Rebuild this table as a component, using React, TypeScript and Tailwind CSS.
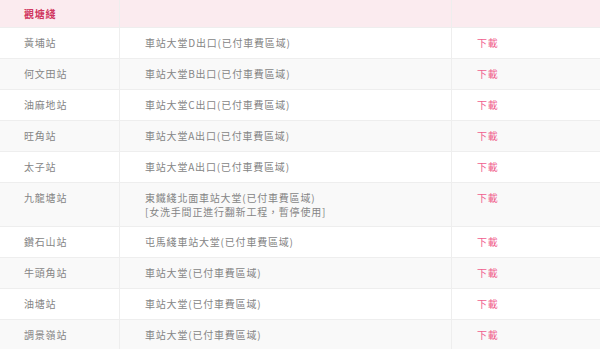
import React from 'react';

interface Row {
  station: string;
  location: string[];
}

const rows: Row[] = [
  { station: '黃埔站', location: ['車站大堂D出口(已付車費區域)'] },
  { station: '何文田站', location: ['車站大堂B出口(已付車費區域)'] },
  { station: '油麻地站', location: ['車站大堂C出口(已付車費區域)'] },
  { station: '旺角站', location: ['車站大堂A出口(已付車費區域)'] },
  { station: '太子站', location: ['車站大堂A出口(已付車費區域)'] },
  { station: '九龍塘站', location: ['東鐵綫北面車站大堂(已付車費區域)', '[女洗手間正進行翻新工程，暫停使用]'] },
  { station: '鑽石山站', location: ['屯馬綫車站大堂(已付車費區域)'] },
  { station: '牛頭角站', location: ['車站大堂(已付車費區域)'] },
  { station: '油塘站', location: ['車站大堂(已付車費區域)'] },
  { station: '調景嶺站', location: ['車站大堂(已付車費區域)'] },
];

const App: React.FC = () => {
  return (
    <div className="w-[600px] h-[349px] overflow-hidden bg-white text-[10px] tracking-[0.8px] leading-[14px] text-[#858585] font-['Noto_Sans_CJK_TC','Noto_Sans',sans-serif]">
      {/* header */}
      <div className="grid grid-cols-[120px_332px_1fr] bg-[#fbebef] border-b border-[#eee]">
        <div className="pl-6 pt-[7px] pb-[6px] border-r border-[#eee] font-bold text-[#d0365f]">觀塘綫</div>
        <div className="border-r border-[#eee]" />
        <div />
      </div>

      {rows.map((r, i) => {
        const pad = r.location.length > 1 ? 'pt-2 pb-[7px]' : 'pt-2 pb-2';
        return (
          <div
            key={i}
            className={`grid grid-cols-[120px_332px_1fr] border-b border-[#eee] ${i % 2 === 1 ? 'bg-[#f9f9f9]' : 'bg-white'}`}
          >
            <div className={`pl-6 border-r border-[#eee] ${pad}`}>{r.station}</div>
            <div className={`pl-[25px] border-r border-[#eee] ${pad}`}>
              {r.location.map((l, j) => (
                <div key={j}>{l}</div>
              ))}
            </div>
            <div className={`pl-[25px] ${pad}`}>
              <a className="text-[#f0608e] cursor-pointer">下載</a>
            </div>
          </div>
        );
      })}
    </div>
  );
};

export default App;
